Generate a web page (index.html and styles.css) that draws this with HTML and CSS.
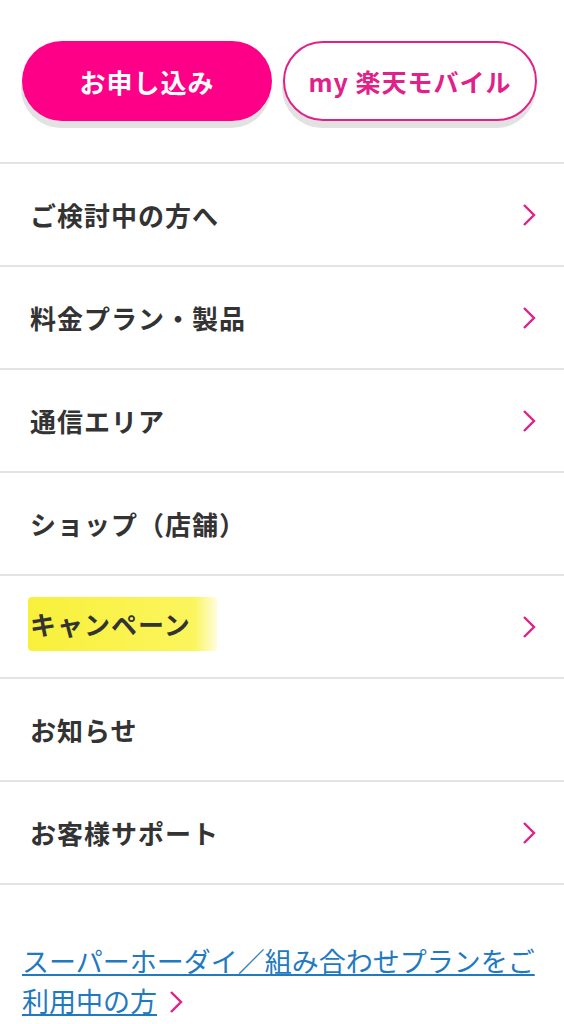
FILE: index.html
```html
<html lang="ja">
  <head>
    <meta name="viewport" content="width=device-width, initial-scale=1.0">
    <link rel="stylesheet" href="styles.css">
  </head>
  <body>
    <div class="action-bar">
      <a class="pill pill-filled" href="#">お申し込み</a>
      <a class="pill pill-outline" href="#">my 楽天モバイル</a>
    </div>
    <ul class="menu">
      <li class="menu-item"><span>ご検討中の方へ</span><svg class="chevron" viewBox="0 0 14 24"><path d="M2 2l10 10L2 22"/></svg></li>
      <li class="menu-item"><span>料金プラン・製品</span><svg class="chevron" viewBox="0 0 14 24"><path d="M2 2l10 10L2 22"/></svg></li>
      <li class="menu-item"><span>通信エリア</span><svg class="chevron" viewBox="0 0 14 24"><path d="M2 2l10 10L2 22"/></svg></li>
      <li class="menu-item"><span>ショップ（店舗）</span></li>
      <li class="menu-item"><span class="marker">キャンペーン</span><svg class="chevron" viewBox="0 0 14 24"><path d="M2 2l10 10L2 22"/></svg></li>
      <li class="menu-item"><span>お知らせ</span></li>
      <li class="menu-item"><span>お客様サポート</span><svg class="chevron" viewBox="0 0 14 24"><path d="M2 2l10 10L2 22"/></svg></li>
    </ul>
    <div class="footer-link">
      <a href="#">スーパーホーダイ／組み合わせプランをご利用中の方</a><svg class="chevron chevron-inline" viewBox="0 0 14 24"><path d="M2 2l10 10L2 22"/></svg>
    </div>
  </body>
</html>
```

FILE: styles.css
```css
body {
  margin: 0;
  background-color: #fff;
  color: #333;
  font-family: "Noto Sans CJK JP", "Noto Sans", sans-serif;
}

.action-bar {
  display: flex;
  gap: 11px;
  padding: 41px 27px 0 22px;
  height: 164px;
  box-sizing: border-box;
  border-bottom: 2px solid #e3e3e3;
}

.pill {
  flex: 1;
  height: 80px;
  box-sizing: border-box;
  border-radius: 40px;
  display: flex;
  align-items: center;
  justify-content: center;
  font-size: 25px;
  font-weight: bold;
  letter-spacing: 1px;
  text-decoration: none;
  box-shadow: -1px 7px 0 #e2e2e2;
}

.pill-filled {
  background-color: #fe0088;
  color: #fff;
  font-size: 26px;
}

.pill-outline {
  background-color: #fff;
  color: #e0218a;
  border: 2px solid #e0218a;
}

.menu {
  list-style: none;
  margin: 0;
  padding: 0;
}

.menu-item {
  display: flex;
  align-items: center;
  justify-content: space-between;
  height: 103px;
  box-sizing: border-box;
  padding: 0 28px 0 30px;
  border-bottom: 2px solid #e3e3e3;
  font-size: 26px;
  font-weight: bold;
  letter-spacing: 1px;
}

.marker {
  display: inline-block;
  line-height: 38px;
  margin: -6px 0 0 -2px;
  padding: 8px 26px 8px 2px;
  background: linear-gradient(90deg, #f8f03a, #fbf55e 88%, rgba(253, 248, 140, 0.3));
  border-radius: 4px;
}

.chevron {
  width: 14px;
  height: 24px;
  fill: none;
  stroke: #e0218a;
  stroke-width: 2.4;
}

.footer-link {
  padding: 56px 27px 0 22px;
  font-size: 27px;
  line-height: 40px;
}

.footer-link a {
  color: #1f7ac0;
}

.chevron-inline {
  margin-left: 12px;
  vertical-align: -2px;
}
```
